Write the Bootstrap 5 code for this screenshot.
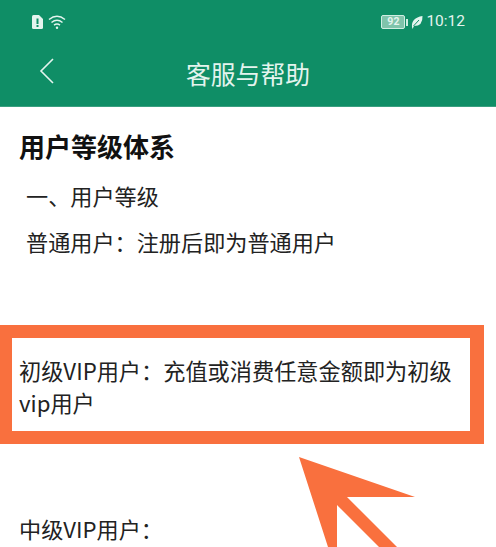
<!DOCTYPE html>
<html lang="zh">
<head>
<meta charset="utf-8">
<link href="https://cdn.jsdelivr.net/npm/bootstrap@5.3.0/dist/css/bootstrap.min.css" rel="stylesheet">
<style>
html,body{height:547px;overflow:hidden;background:#fff}
body{font-family:"Noto Sans CJK SC","Liberation Sans",sans-serif;color:#222;position:relative;width:496px}
.topband{background:#0f8e66;height:107px;color:#e4f4ee;border-bottom:1px solid #3a9f80}
.statusrow{height:44px;padding:0 31px 0 31px}
.clock{font-family:Roboto,"Liberation Sans",sans-serif;font-size:15.5px;line-height:1;margin-left:3px}
.batt{width:24px;height:14px;border:1.5px solid #cfeee2;border-radius:2px;font:700 10.500px/11px Roboto,sans-serif;background:#7fc4ab;color:#e4f4ee;text-align:center}
.nub{width:2px;height:7px;background:#cfeee2;margin:0 3px 0 1px}
.titlerow{height:62px;position:relative}
.pagetitle{font-size:24.8px;line-height:1;padding-bottom:4px}
.backbtn{position:absolute;left:38px;top:13px}
.article{padding:22px 19px 0 20px}
.headline{font-size:26px;font-weight:700;line-height:34px;margin:0 0 15px -1px;color:#111}
.para{font-size:22.15px;line-height:35px;margin:0 0 11px 6px;white-space:nowrap}
.callout{margin:66px 12px 0 -20px;border:solid #f9703e;border-width:13px 14px 13px 12px;padding:16px 0 13px 7px;font-size:22.200px;line-height:32px;width:484px;white-space:nowrap}
.para-low{font-size:22.15px;line-height:35px;margin:67px 0 0 -1px;white-space:nowrap}
.pointer{position:absolute;left:290px;top:450px}
</style>
</head>
<body>
<header class="topband">
  <div class="statusrow d-flex align-items-center justify-content-between">
    <div class="d-flex align-items-center gap-1">
      <svg width="13" height="16" viewBox="0 0 13 16"><path d="M1 2.500Q1 1 2.500 1H8L12 5V13.500Q12 15 10.500 15H2.500Q1 15 1 13.500Z" fill="#e4f4ee"/><rect x="5.500" y="4.500" width="2" height="5.500" fill="#0f8e66"/><rect x="5.500" y="11" width="2" height="2" fill="#0f8e66"/></svg>
      <svg width="18" height="16" viewBox="0 0 18 16" fill="none" stroke="#e4f4ee" stroke-width="1.500"><path d="M1 5.500Q9-1 17 5.500"/><path d="M3.500 8.500Q9 4 14.500 8.500"/><path d="M6 11.200Q9 9 12 11.200"/><circle cx="9" cy="13.800" r="1.200" fill="#e4f4ee" stroke="none"/></svg>
    </div>
    <div class="d-flex align-items-center">
      <div class="batt">92</div><div class="nub"></div>
      <svg width="12" height="14" viewBox="0 0 12 14"><path d="M1 12Q0 3 11.500 1Q12 11 3 11L1.500 14Z" fill="#e4f4ee"/><path d="M2.500 11L8 5" stroke="#0f8e66" stroke-width="1" fill="none"/></svg>
      <span class="clock">10:12</span>
    </div>
  </div>
  <div class="titlerow d-flex align-items-center justify-content-center">
    <svg class="backbtn" width="18" height="28" viewBox="0 0 18 28" fill="none" stroke="#e4f4ee" stroke-width="1.600"><path d="M15 2L3 14L15 26"/></svg>
    <div class="pagetitle">客服与帮助</div>
  </div>
</header>
<main class="article">
  <h1 class="headline">用户等级体系</h1>
  <p class="para">一、用户等级</p>
  <p class="para">普通用户：注册后即为普通用户</p>
  <div class="callout">初级VIP用户：充值或消费任意金额即为初级<br>vip用户</div>
  <p class="para-low">中级VIP用户：</p>
</main>
<svg class="pointer" width="130" height="97" viewBox="290 450 130 97"><path d="M299 457L415 497H347L397 547H379L337 505V547H328Z" fill="#f9703e"/></svg>
</body>
</html>
